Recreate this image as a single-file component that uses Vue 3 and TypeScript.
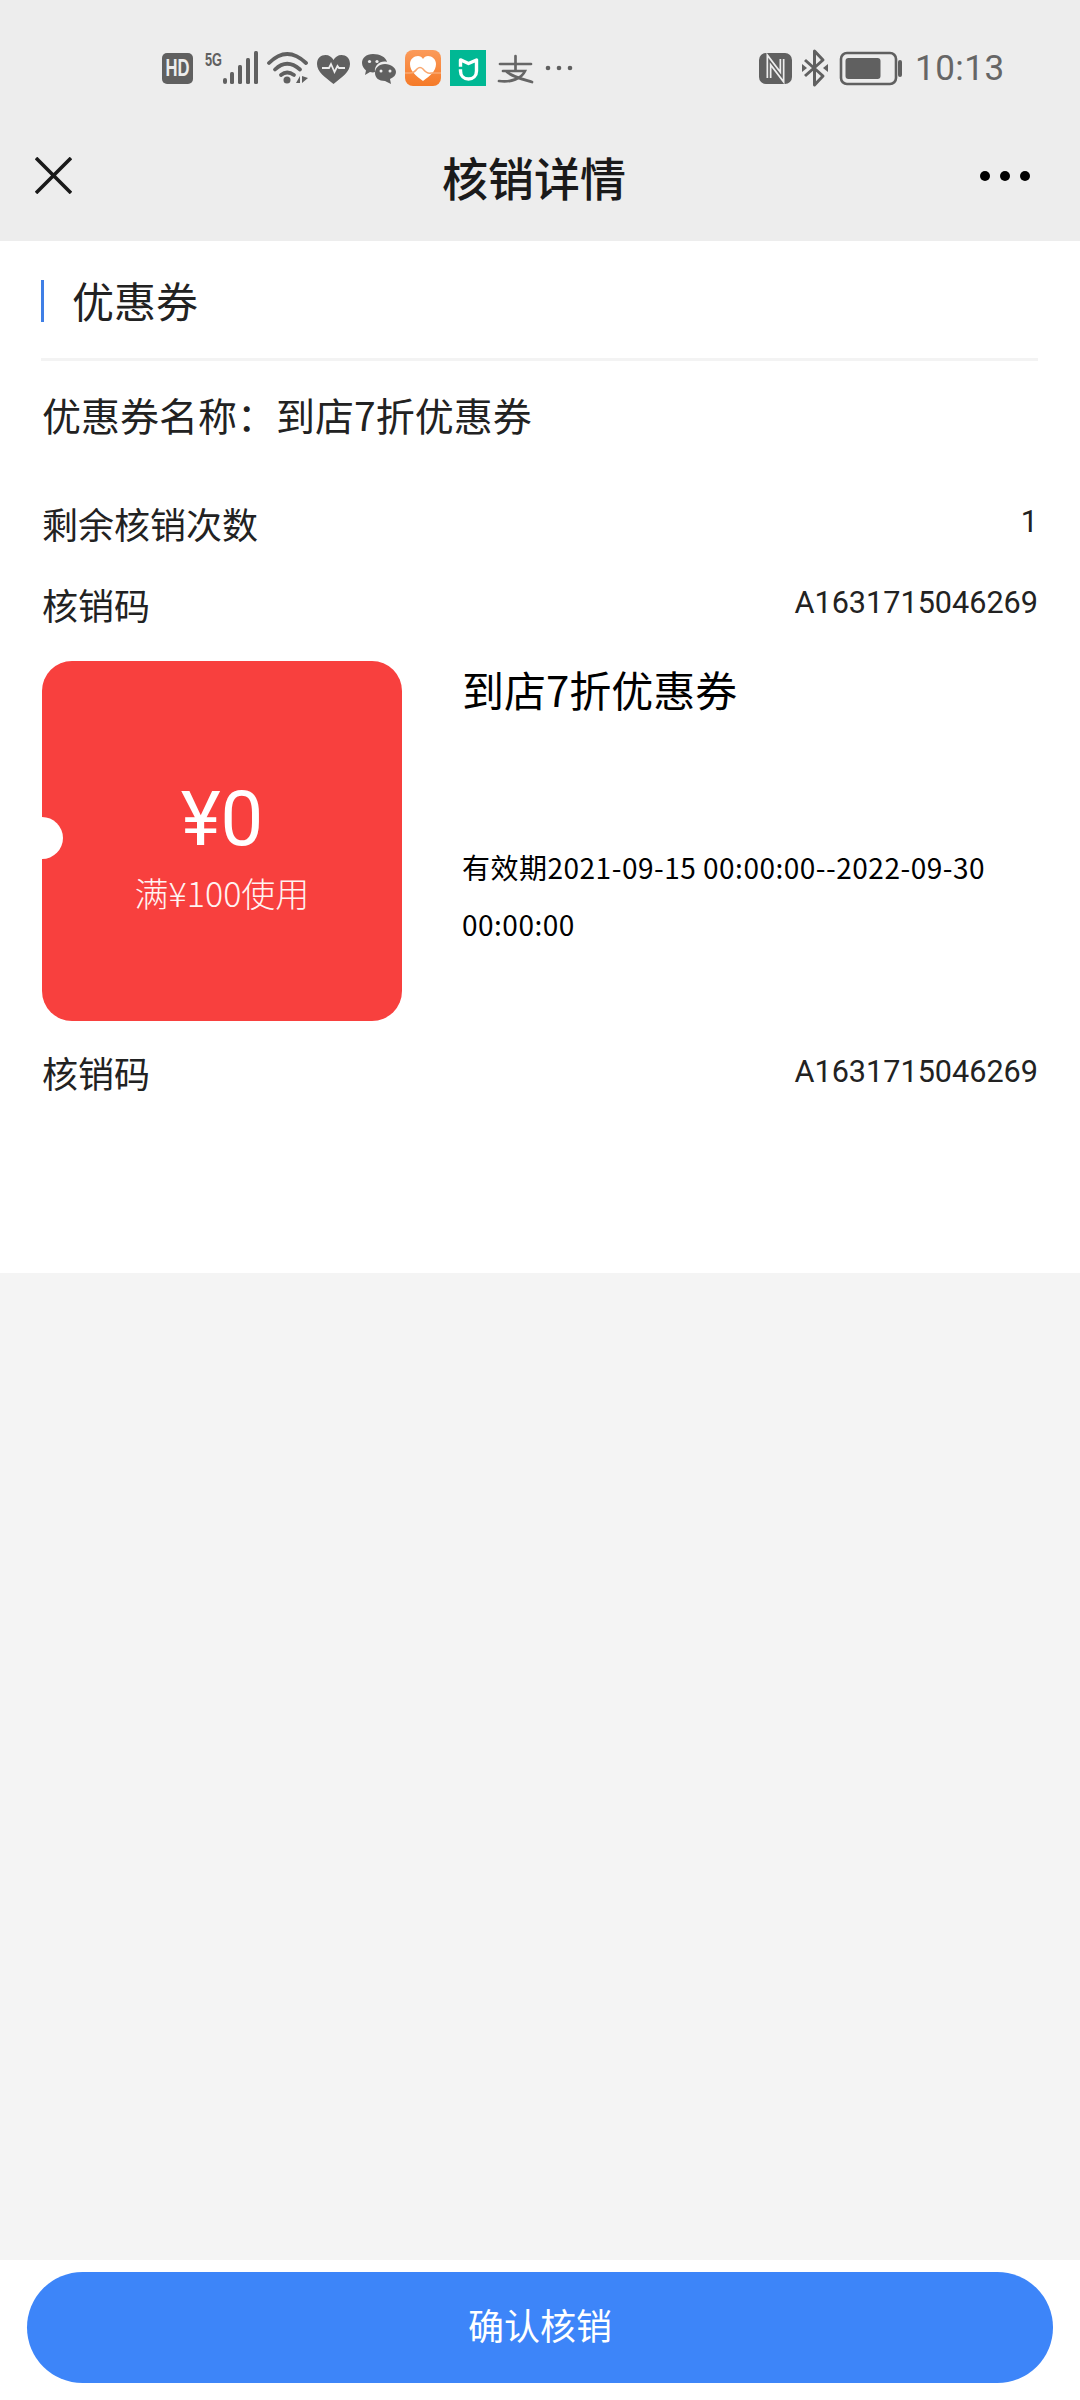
<script setup lang="ts">
const pageTitle: string = '核销详情'
const code: string = 'A1631715046269'
</script>

<template>
  <div class="page">
    <header class="top">
      <div class="status">
        <svg class="status-left" viewBox="160 46 420 44" width="420" height="44" aria-hidden="true">
          <rect x="162" y="53" width="31" height="31" rx="5" fill="#606060" />
          <text x="165.500" y="76" textLength="24" lengthAdjust="spacingAndGlyphs" class="hd">HD</text>
          <text x="205" y="66" textLength="17" lengthAdjust="spacingAndGlyphs" class="fiveg">5G</text>
          <g fill="#606060">
            <rect x="223" y="78" width="4" height="6" rx="2" />
            <rect x="230" y="72" width="4" height="12" rx="1.500" />
            <rect x="238" y="65" width="4" height="19" rx="1.500" />
            <rect x="246" y="58" width="4" height="26" rx="1.500" />
            <rect x="254" y="51" width="4" height="33" rx="1.500" />
          </g>
          <g fill="none" stroke="#606060" stroke-width="3.800" stroke-linecap="round">
            <path d="M269 63 Q287 45 306 63" />
            <path d="M275 69.500 Q287 58 300 69.500" />
            <path d="M281 75 Q287 70 294 75" />
          </g>
          <circle cx="287" cy="80" r="3.500" fill="#606060" />
          <path d="M296 83 L300 76 L300 83 Z M302 76 L302 83 L308 78 Z" fill="#606060" />
          <path d="M333.500 84 C325 77 317 72 317 64 C317 58 321 55 325.500 55 C329 55 332 57 333.500 60 C335 57 338 55 341.500 55 C346 55 350 58 350 64 C350 72 342 77 333.500 84 Z" fill="#606060" />
          <path d="M322 68 H329 L331 64 L334.500 72 L337.500 66 L339 68 H345" fill="none" stroke="#ededed" stroke-width="1.800" />
          <path d="M373 54 C366 54 362 58 362 63 C362 66 364 69 366 70.500 L365 75 L370 72 C372 72.500 374 72.500 375 72 C374 65 381 60 387 62 C386 57 380 54 373 54 Z" fill="#606060" />
          <path d="M385 64 C379 64 375 68 375 73 C375 78 379 81 385 81 L391 84 L390 79 C394 77 396 75 396 72 C396 68 391 64 385 64 Z" fill="#606060" />
          <g fill="#ededed">
            <circle cx="369.500" cy="61.500" r="1.600" />
            <circle cx="377" cy="61.500" r="1.600" />
            <circle cx="381" cy="71" r="1.500" />
            <circle cx="390" cy="71" r="1.500" />
          </g>
          <defs>
            <linearGradient id="health" x1="0" y1="0" x2="0" y2="1">
              <stop offset="0" stop-color="#fb9a5a" />
              <stop offset="1" stop-color="#f57a28" />
            </linearGradient>
          </defs>
          <rect x="405" y="50" width="36" height="36" rx="8" fill="url(#health)" />
          <path d="M423 81 C416 76 410 71 410 64 C410 59 414 56 418 56 C420 56 422 57 423 59 C424 57 426 56 428 56 C432 56 436 59 436 64 C436 71 430 76 423 81 Z" fill="#fff" />
          <path d="M405 73 H410 Q414 73 417 69 Q420 66 423 69 Q427 74 431 73 H441" fill="none" stroke="#f9a871" stroke-width="1.500" />
          <rect x="450" y="50" width="36" height="36" fill="#00b894" />
          <path d="M461 60 L468.500 63.500 L476.500 60 V71 C476.500 76 473 79 468.500 79 C464 79 460.500 76 460.500 71 V60 Z" fill="none" stroke="#fff" stroke-width="3.400" stroke-linejoin="round" />
          <path d="M458 68 L463 68" fill="none" stroke="#00b894" stroke-width="2.500" />
          <g fill="none" stroke="#666" stroke-width="2.700" stroke-linecap="round">
            <path d="M500 64 H531" />
            <path d="M515.500 56 V70" />
            <path d="M503 71 H525 C522 78 511 83 499 81" />
            <path d="M507 72 C513 77 522 79 532 82" />
          </g>
          <g fill="#606060">
            <circle cx="548" cy="68" r="2.300" />
            <circle cx="559" cy="68" r="2.300" />
            <circle cx="570" cy="68" r="2.300" />
          </g>
        </svg>
        <svg class="status-right" viewBox="755 46 150 44" width="150" height="44" aria-hidden="true">
          <rect x="759" y="53" width="33" height="31" rx="7" fill="#606060" />
          <path d="M769 78 V60 L782 77 V59" fill="none" stroke="#ededed" stroke-width="5" />
          <path d="M769 78 V60 L782 77 V59" fill="none" stroke="#606060" stroke-width="1.600" />
          <path d="M805 60 L823 76 L814.500 85 V51 L823 60 L805 76" fill="none" stroke="#606060" stroke-width="3" stroke-linejoin="round" />
          <path d="M802 64 L807 68 L802 72 Z M828 64 L823 68 L828 72 Z" fill="#606060" />
          <rect x="841" y="53" width="55" height="31" rx="6" fill="none" stroke="#606060" stroke-width="2.600" />
          <rect x="845.500" y="58" width="35" height="21" rx="3" fill="#606060" />
          <rect x="898" y="60" width="4" height="17" rx="2" fill="#606060" />
        </svg>
        <span class="time">10:13</span>
      </div>
      <nav class="nav">
        <svg class="close" viewBox="0 0 37 37" width="37" height="37" aria-hidden="true">
          <path d="M1 1 L36 36 M36 1 L1 36" fill="none" stroke="#1a1a1a" stroke-width="3.600" />
        </svg>
        <h1 class="title">{{ pageTitle }}</h1>
        <div class="dots" aria-hidden="true"><i></i><i></i><i></i></div>
      </nav>
    </header>

    <main class="card">
      <div class="section-head">
        <span class="bar"></span>
        <span class="section-title">优惠券</span>
      </div>
      <div class="name">优惠券名称：到店7折优惠券</div>
      <div class="row first">
        <span class="label">剩余核销次数</span>
        <span class="value">1</span>
      </div>
      <div class="row second">
        <span class="label">核销码</span>
        <span class="value">{{ code }}</span>
      </div>
      <div class="coupon">
        <div class="ticket">
          <span class="notch"></span>
          <div class="amount">¥0</div>
          <div class="limit">满¥100使用</div>
        </div>
        <div class="info">
          <div class="info-title">到店7折优惠券</div>
          <div class="validity">有效期2021-09-15 00:00:00--2022-09-30 00:00:00</div>
        </div>
      </div>
      <div class="row third">
        <span class="label">核销码</span>
        <span class="value">{{ code }}</span>
      </div>
    </main>

    <div class="spacer"></div>

    <footer class="footer">
      <button class="confirm" type="button">确认核销</button>
    </footer>
  </div>
</template>

<style scoped>
.page {
  width: 1080px;
  height: 2400px;
  display: flex;
  flex-direction: column;
  background: #f4f4f4;
  font-family: "Noto Sans CJK SC", "Noto Sans", sans-serif;
  color: #222;
}
.top {
  background: #ededed;
}
.status {
  height: 116px;
  box-sizing: border-box;
  padding: 20px 0 0 160px;
  display: flex;
  align-items: center;
}
.status-right {
  margin-left: 175px;
}
.time {
  margin-left: 10px;
  font-family: Roboto, sans-serif;
  font-size: 35px;
  color: #666;
  letter-spacing: 0.5px;
}
.hd {
  font-family: "Liberation Sans", sans-serif;
  font-size: 24px;
  font-weight: 700;
  fill: #ededed;
}
.fiveg {
  font-family: "Liberation Sans", sans-serif;
  font-size: 18px;
  font-weight: 700;
  fill: #606060;
}
.nav {
  height: 125px;
  box-sizing: border-box;
  padding-bottom: 6px;
  display: grid;
  grid-template-columns: 442px auto 1fr;
  align-items: center;
}
.close {
  margin-left: 35px;
}
.title {
  margin: 0;
  font-size: 46px;
  font-weight: 500;
  color: #1a1a1a;
  line-height: 60px;
}
.dots {
  justify-self: end;
  margin-right: 50px;
  display: flex;
  gap: 10px;
}
.dots i {
  width: 10px;
  height: 10px;
  border-radius: 50%;
  background: #000;
}
.card {
  background: #fff;
  padding: 0 42px 173px 41px;
}
.section-head {
  display: flex;
  align-items: center;
  padding: 39px 0 36px;
  border-bottom: 3px solid #f3f3f3;
}
.bar {
  width: 3px;
  height: 42px;
  background: #3f7fe6;
}
.section-title {
  margin-left: 28px;
  margin-top: -2px;
  font-size: 42px;
  line-height: 42px;
}
.name {
  margin-top: 25px;
  font-size: 39px;
  line-height: 56px;
  padding-left: 1px;
}
.row {
  display: flex;
  justify-content: space-between;
  align-items: flex-start;
  height: 50px;
}
.row.first {
  margin-top: 58px;
}
.row.second {
  margin-top: 31px;
}
.row.third {
  margin-top: 29px;
}
.label {
  font-size: 36px;
  line-height: 46px;
  padding-left: 1px;
}
.row.third .label {
  line-height: 44px;
}
.value {
  font-family: Roboto, sans-serif;
  font-size: 30.600px;
  line-height: 44px;
}
.coupon {
  margin-top: 30px;
  display: flex;
}
.ticket {
  position: relative;
  overflow: hidden;
  flex: none;
  box-sizing: border-box;
  width: 360px;
  height: 360px;
  margin-left: 1px;
  padding-top: 15px;
  border-radius: 30px;
  background: #f8403e;
  color: #fff;
  display: flex;
  flex-direction: column;
  align-items: center;
  justify-content: center;
}
.notch {
  position: absolute;
  left: -21px;
  top: 156px;
  width: 42px;
  height: 42px;
  border-radius: 50%;
  background: #fff;
}
.amount {
  font-family: Roboto, sans-serif;
  font-size: 76px;
  line-height: 80px;
}
.limit {
  margin-top: 9px;
  font-size: 34px;
  font-weight: 300;
  line-height: 50px;
  color: #fff3f2;
}
.info {
  margin-left: 60px;
  min-width: 0;
  color: #000;
}
.info-title {
  margin-top: -2px;
  font-size: 42px;
  line-height: 60px;
}
.validity {
  margin-top: 120px;
  font-size: 28px;
  letter-spacing: 0.5px;
  line-height: 57px;
}
.spacer {
  flex: 1;
}
.footer {
  height: 140px;
  box-sizing: border-box;
  background: #fff;
  padding: 12px 27px 0;
}
.confirm {
  display: block;
  width: 100%;
  height: 111px;
  border: 0;
  padding: 0 0 8px;
  border-radius: 56px;
  background: #3d85f9;
  color: #fff;
  font-family: inherit;
  font-size: 36px;
}
</style>
